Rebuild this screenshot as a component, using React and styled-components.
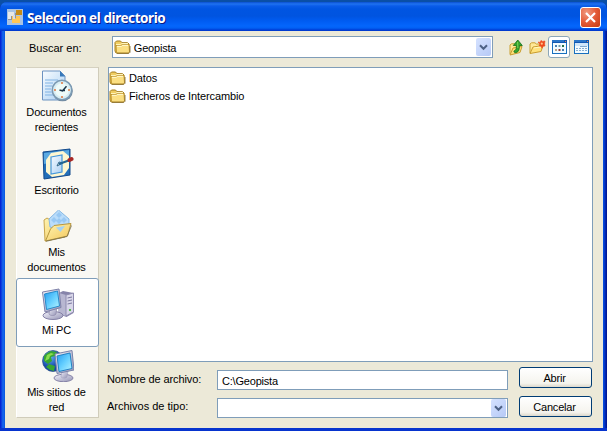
import React from "react";
import styled, { createGlobalStyle } from "styled-components";

const Global = createGlobalStyle`
  * { box-sizing: border-box; }
  body { margin: 0; overflow: hidden; background: #0a4fae; font-family: "Liberation Sans", Arial, sans-serif; font-size: 11px; color: #000; }
  svg { display: block; flex: none; }
`;

const Desktop = styled.div`
  width: 607px;
  height: 431px;
  padding-top: 2px;
  background: #0a4fa6;
`;
const Window = styled.section`
  height: 429px;
  display: flex;
  flex-direction: column;
  padding: 0 4px 3px 5px;
  border-radius: 7px 7px 0 0;
  background: linear-gradient(90deg, #0019cf 0, #0831d9 1px, #166aee 3px, #0855dd 5px, #0855dd 603px, #0441d8 604px, #001ea0 606px, #00138c 607px);
  box-shadow: inset 0 -3px 0 #0734ce, inset 0 -1px 0 #00138c;
`;
const TitleBar = styled.header`
  height: 29px;
  flex: none;
  margin: 0 -4px 0 -5px;
  padding: 1px 6px 0 7px;
  display: flex;
  align-items: center;
  border-radius: 7px 7px 0 0;
  background: linear-gradient(#0a50d0 0, #1f72f0 2px, #0a5ce8 4px, #0055e2 7px, #0054e0 14px, #005cf2 19px, #0466fc 24px, #0261f4 26px, #003dd7 28px, #0038c8 29px);
`;
const Title = styled.h1`
  flex: 1;
  margin: 0 0 0 4px;
  padding-top: 2px;
  font: bold 13.5px/16px "Noto Sans", sans-serif;
  letter-spacing: -0.42px;
  color: #fff;
  text-shadow: 1px 1px 0 #0a1883;
  white-space: nowrap;
`;
const CloseButton = styled.button`
  width: 21px;
  height: 21px;
  padding: 0;
  border: 1px solid #fff;
  border-radius: 3px;
  background: radial-gradient(circle at 30% 25%, #f09a80, #e35a36 50%, #c43a12);
  display: grid;
  place-items: center;
`;
const Body = styled.main`
  flex: 1;
  min-height: 0;
  display: flex;
  flex-direction: column;
  background: #ece9d8;
  padding: 5px 10px 10px 11px;
`;
const LookIn = styled.div`
  display: flex;
  align-items: center;
  height: 22px;
`;
const LookLabel = styled.label`
  width: 96px;
  padding: 1px 0 0 13px;
`;
const Field = styled.div`
  width: ${(p) => p.$width}px;
  height: ${(p) => p.$height}px;
  display: flex;
  align-items: center;
  padding: 0 1px;
  background: #fff;
  border: 1px solid #7f9db9;
  letter-spacing: -0.2px;
`;
const Value = styled.span`
  flex: 1;
  padding: 1px 0 0 3px;
`;
const Arrow = styled.span`
  width: 15px;
  height: 100%;
  max-height: 18px;
  display: grid;
  place-items: center;
  border-radius: 2px;
  background: linear-gradient(135deg, #d5e2ff, #b6c9f6);
`;
const Tools = styled.div`
  display: flex;
  align-items: center;
  margin-left: 13px;
`;
const Tool = styled.button`
  width: ${(p) => p.$width || 22}px;
  height: 22px;
  padding: 0;
  display: grid;
  place-items: center;
  background: ${(p) => (p.$active ? "#fff" : "transparent")};
  border: 1px solid ${(p) => (p.$active ? "#8ba6b8" : "transparent")};
  border-radius: 3px;
`;
const Middle = styled.div`
  flex: 1;
  min-height: 0;
  display: flex;
  gap: 9px;
  margin-top: 9px;
`;
const Places = styled.nav`
  width: 83px;
  height: 351px;
  flex: none;
  display: flex;
  flex-direction: column;
  padding-top: 2px;
  gap: 13px;
  background: #f9f8f3;
  border: 1px solid #fff;
  border-top-color: #d5d1c0;
  border-right-color: #d0ccba;
  border-bottom-color: #d0ccba;
`;
const Place = styled.div`
  height: ${(p) => (p.$lines === 2 ? 65 : 49)}px;
  flex: none;
  display: flex;
  flex-direction: column;
  align-items: center;
  text-align: center;
  line-height: 15px;
  letter-spacing: -0.15px;
  white-space: pre-line;
  border-radius: 3px;
  ${(p) => p.$selected && `
    margin: -10px -1px;
    padding: 9px 0;
    height: 69px;
    background: #fff;
    border: 1px solid #7f9db9;
  `}
`;
const PlaceText = styled.span`
  width: 78px;
  margin-top: 3px;
  padding-right: 2px;
`;
const Right = styled.div`
  flex: 1;
  display: flex;
  flex-direction: column;
`;
const FileList = styled.ul`
  width: 485px;
  height: 295px;
  margin: 0;
  padding: 1px 0;
  list-style: none;
  background: #fff;
  border: 1px solid #7f9db9;
`;
const FileRow = styled.li`
  height: 18px;
  display: flex;
  align-items: center;
  gap: 3px;
  letter-spacing: -0.12px;
`;
const Form = styled.div`
  display: grid;
  grid-template-columns: 109px 291px 73px;
  grid-template-rows: 20px 20px;
  row-gap: 8px;
  padding-top: 8px;
`;
const FormLabel = styled.label`
  line-height: ${(p) => p.$line || 18}px;
  margin-left: -1px;
  letter-spacing: ${(p) => p.$tracking || 0}px;
`;
const Action = styled.button`
  width: 73px;
  height: 21px;
  margin: ${(p) => p.$top}px 0 0 11px;
  padding: 0 2px 0 0;
  font: 11px "Liberation Sans", Arial, sans-serif;
  letter-spacing: -0.2px;
  color: #000;
  border: 1px solid #003c74;
  border-radius: 3px;
  background: linear-gradient(#fff, #f5f4ee 80%, #dcd8cb);
`;

const Chevron = () => (
  <svg width="9" height="7" viewBox="0 0 9 7" fill="none" stroke="#4d6185" strokeWidth="2">
    <path d="M1 1.3 4.5 4.8 8 1.3" />
  </svg>
);

const Folder = () => (
  <svg width="17" height="14" viewBox="0 0 17 14">
    <path d="M1 11V2.5L2.5 1h4L8 2.7h5.5L15 4v8l-1 1H2z" fill="#f0cd62" stroke="#a27c1d" />
    <path d="M2 4.5h4.5L8 3.5h6" stroke="#fff4bb" fill="none" />
    <path d="M2.5 12 2 5.5h5L8.5 4.5H15L15.5 12l-1 1H3z" fill="#fbdf82" stroke="#b98d24" strokeWidth=".8" />
    <path d="M3 6.3h4.5l1-1H14" stroke="#fffbd7" fill="none" />
    <path d="M3 13.3h12l1-1V6" stroke="#7c6224" fill="none" strokeWidth=".8" />
  </svg>
);

const AppIcon = () => (
  <svg width="16" height="16" viewBox="0 0 16 16">
    <path d="M0 0h16v16H0z" fill="#a9c3e3" />
    <path d="M1 3h6v7H1z" fill="#e7e8e8" />
    <path d="M5 7h8v7H5z" fill="#ffc654" />
    <path d="M9 1h6v5H9z" fill="#c58a16" />
    <path d="M6 6h3v4H6z" fill="#d9dde3" />
    <path d="M8.5 4v5.5M1 10.5h4M4.5 7v3" stroke="#8d929b" fill="none" />
  </svg>
);

const OpenFolder = () => (
  <>
    <path d="M1 14V5l1.5-1.2H6L7.3 5H12v2" fill="#ffe898" stroke="#caa033" />
    <path d="M1 14.5 4 8l10-1.5-2 6z" fill="#ffe27c" stroke="#c99c2e" strokeLinejoin="round" />
    <path d="m4.7 9 7.8-1.2" stroke="#fff8c8" />
  </>
);
const UpIcon = () => (
  <svg width="16" height="17" viewBox="0 0 16 17" fill="none">
    <path d="M2 15V6l1.5-1.2h3L7.5 6H13v2" fill="#ffe898" stroke="#caa033" />
    <path d="M2 16 5 9l9-1.5-2 6z" fill="#ffe27c" stroke="#c99c2e" strokeLinejoin="round" />
    <path d="M6.7 13.7c3.6 0 4.9-2.4 4.6-7.2h3L9.8 1 5.3 6.5h3c.2 3 .2 4.5-2.5 5.6z" fill="#35a52e" stroke="#14701b" strokeWidth=".8" />
    <path d="m9.6 3 .3 6" stroke="#79d159" />
  </svg>
);
const NewIcon = () => (
  <svg width="17" height="16" viewBox="0 0 17 16" fill="none">
    <OpenFolder />
    <path d="m9 3 2 .4 1-2 1.5 1L16 2l-.5 3 .5 2-2 .2-1 2-1-2-2-.4 1-1.8z" fill="#ee4a1c" stroke="#ee4a1c" strokeWidth=".6" />
    <circle cx="12.8" cy="4.7" r="1.1" fill="#ffc28a" />
  </svg>
);
const ViewIcon = ({ details }) => (
  <svg width="15" height="14" viewBox="0 0 15 14">
    <path d="M0 0h15v14H0z" fill="#1970bf" />
    <path d="M0 0h15v3H0z" fill="#1258b2" />
    <path d="M0 1h12" stroke="#4292dd" />
    <path d="M13 1h1v1h-1z" fill="#f08852" />
    <path d="M1 3h13v10H1z" fill="#f2fbff" />
    {details ? (
      <g>
        <path d="M1 3h13v3H1z" fill="#cfe6fa" />
        <path d="M6 6.5h7" stroke="#7fa9cf" />
        <path d="M2 8.5h11M2 10.5h11" stroke="#86aed2" strokeDasharray="2 1" />
      </g>
    ) : (
      <>
        <path d="M3 5h2v2H3zm7 4h2v2h-2z" fill="#487fb4" />
        <path d="M6.5 5h2v2h-2z" fill="#709ca9" />
        <path d="M10 5h2v2h-2z" fill="#27724a" />
        <path d="M3 9h2v2H3z" fill="#b8a489" />
        <path d="M6.5 9h2v2h-2z" fill="#923c37" />
      </>
    )}
  </svg>
);

const Big = ({ children }) => (
  <svg width="32" height="32" viewBox="0 0 32 32" fill="none">
    <defs>
      <linearGradient id="screen" x2="1" y2="1"><stop stopColor="#239bf0" /><stop offset=".5" stopColor="#65cfff" /><stop offset="1" stopColor="#b8f4ff" /></linearGradient>
      <linearGradient id="paper" x2="1" y2="1"><stop stopColor="#f8fcff" /><stop offset="1" stopColor="#a9cff3" /></linearGradient>
      <linearGradient id="gold" x2="1" y2="1"><stop stopColor="#fff4b1" /><stop offset="1" stopColor="#f3c659" /></linearGradient>
      <linearGradient id="metal" x2="1" y2="1"><stop stopColor="#f3f3fb" /><stop offset="1" stopColor="#9493b5" /></linearGradient>
      <radialGradient id="earth" cx=".35" cy=".3"><stop stopColor="#63b8fa" /><stop offset="1" stopColor="#1647aa" /></radialGradient>
    </defs>
    {children}
  </svg>
);
const RecentIcon = () => (
  <Big>
    <path d="M.5 1h17.5l5 5v24H.5z" fill="url(#paper)" stroke="#6d93c2" />
    <path d="M18 1v5.5h5z" fill="#3778b9" />
    <path d="M3 10h13M3 13h8M3 16h7M3 19h6M3 22h7M3 25h8" stroke="#80b3e3" />
    <circle cx="20.5" cy="21" r="10.3" fill="#71899f" />
    <circle cx="20" cy="20" r="9.7" fill="#d8edf3" stroke="#7c9bb4" strokeWidth="1.5" />
    <circle cx="20" cy="20" r="6.8" fill="#eefbf9" />
    <path d="M20 12v2M20 26v2M12 20h2M26 20h2" stroke="#e1773f" strokeWidth="1.5" />
    <path d="m17.5 20 3 1 4-4.8M19 20.5h4" stroke="#173348" strokeWidth="1.5" />
  </Big>
);
const DesktopIcon = () => (
  <Big>
    <path d="M1 4 28 1v26L2 31z" fill="#236fb9" stroke="#144b8c" />
    <path d="m2 5 25-3v9L2 16z" fill="#5aa9e1" />
    <path d="m4 12 5-7 12-2 6 5v12l-5 7-12 2-6-5z" fill="#fff7d0" />
    <path d="m9 9 11-2v17L9 26z" fill="url(#paper)" stroke="#4396da" strokeWidth="1.2" />
    <path d="m15 18 2-4 4 1z" fill="#dcebf0" stroke="#356a8a" />
    <path d="m17 16 11-4" stroke="#236693" strokeWidth="2" />
    <path d="m27.5 12 2-1" stroke="#a82825" strokeWidth="4" strokeLinecap="round" />
  </Big>
);
const DocumentsIcon = () => (
  <Big>
    <path d="m2 10 3-2 5 3 4 3 14 0-5 13-20 4z" fill="url(#gold)" stroke="#c8a54d" />
    <path d="M16.5 0 7 9l1 8 8 3 11-6V9z" fill="#b9dcfa" stroke="#86b8e4" strokeLinejoin="round" />
    <path d="m17 2 3 3-3 3-3-3zm-5 5 3 3-3 3-3-3zm5 1 3 3-3 3-3-3zm5-1 3 3-3 3-3-3z" fill="#98c8f3" />
    <path d="m3.500 31 5-12 3.500-3.500 17-2-3.500 12.500z" fill="url(#gold)" stroke="#b8973f" strokeLinejoin="round" />
    <path d="m14 17.500 9-1.500-4.500 6z" fill="#a5d2f2" />
    <path d="m4 31.300 21-4.800 4.500-11" stroke="#78704e" strokeWidth=".8" />
  </Big>
);
const Monitor = () => (
  <>
    <ellipse cx="11" cy="27.500" rx="10" ry="4" fill="url(#metal)" stroke="#8582a7" />
    <path d="m8 19 7-1-1 8c-1 2-6 2-7 0z" fill="url(#metal)" stroke="#8482a3" strokeWidth=".6" />
    <path d="M.5 4 17 1l2 18.500L3 24z" fill="url(#metal)" stroke="#7d80a8" />
    <path d="m2.500 6 13-3 2 15L4.500 21.500z" fill="url(#screen)" stroke="#268acb" />
  </>
);
const ComputerIcon = () => (
  <Big>
    <path d="m17 5 4-2 10.500 2v20l-7 4-8-3V5z" fill="#8684aa" />
    <path d="m17 5 7 2v21l-7-2z" fill="#b8b7d1" />
    <path d="m24 7 7.500-2v19L24 28z" fill="#d8d6e9" stroke="#8e8baf" />
    <path d="m25.500 10 4.500-1m-4.500 4 4.500-1m-4.500 4 4.500-1" stroke="#7c7a9f" />
    <path d="M27 21h2v2h-2z" fill="#58b94f" />
    <Monitor />
  </Big>
);
const NetworkIcon = () => (
  <Big>
    <circle cx="11" cy="11" r="10.500" fill="url(#earth)" stroke="#295080" strokeWidth=".7" />
    <path d="M4 4 9 1l6 1-2 4-4 1 1 4-4 3-4-3 0-5zm3 10 6 2-1 5-4-1-4-3z" fill="#38a632" />
    <path d="m5 5 4-2 3 1-4 2-1 3-4 2z" fill="#8bdd4e" />
    <g transform="translate(12 0)">
      <ellipse cx="9.500" cy="28" rx="9.500" ry="3.700" fill="url(#metal)" stroke="#8582a7" />
      <path d="m8 20 6 1-1 6c-2 2-5 1-6 0z" fill="url(#metal)" stroke="#9a98b9" strokeWidth=".5" />
      <path d="m1 4 17-3.500 2 19.500-17 3.500z" fill="url(#metal)" stroke="#7a82a9" />
      <path d="m3 6 13-3 2 15.500-13 3z" fill="url(#screen)" stroke="#2383c4" />
    </g>
  </Big>
);

const places = [
  { text: "Documentos\nrecientes", lines: 2, Icon: RecentIcon },
  { text: "Escritorio", lines: 1, Icon: DesktopIcon },
  { text: "Mis\ndocumentos", lines: 2, Icon: DocumentsIcon },
  { text: "Mi PC", lines: 1, Icon: ComputerIcon, selected: true },
  { text: "Mis sitios de\nred", lines: 2, Icon: NetworkIcon },
];

export default function App() {
  return (
    <Desktop>
      <Global />
      <Window>
        <TitleBar>
          <AppIcon />
          <Title>Seleccion el directorio</Title>
          <CloseButton aria-label="Cerrar">
            <svg width="13" height="13" viewBox="0 0 13 13" stroke="#fff" strokeWidth="2.2"><path d="m2 2 9 9m0-9-9 9" /></svg>
          </CloseButton>
        </TitleBar>
        <Body>
          <LookIn>
            <LookLabel>Buscar en:</LookLabel>
            <Field $width={382} $height={22}>
              <Folder /><Value>Geopista</Value><Arrow><Chevron /></Arrow>
            </Field>
            <Tools>
              <Tool $width={20}><UpIcon /></Tool>
              <Tool $width={22}><NewIcon /></Tool>
              <Tool $width={22} $active><ViewIcon /></Tool>
              <Tool $width={23}><ViewIcon details /></Tool>
            </Tools>
          </LookIn>
          <Middle>
            <Places>
              {places.map(({ text, lines, Icon, selected }) => (
                <Place key={text} $lines={lines} $selected={selected}>
                  <Icon />
                  <PlaceText>{text}</PlaceText>
                </Place>
              ))}
            </Places>
            <Right>
              <FileList>
                <FileRow><Folder />Datos</FileRow>
                <FileRow><Folder />Ficheros de Intercambio</FileRow>
              </FileList>
              <Form>
                <FormLabel $tracking={-0.1}>Nombre de archivo:</FormLabel>
                <Field $width={291} $height={20}><Value>C:\Geopista</Value></Field>
                <Action $top={-3}>Abrir</Action>
                <FormLabel $line={17}>Archivos de tipo:</FormLabel>
                <Field $width={291} $height={20}><Value /><Arrow><Chevron /></Arrow></Field>
                <Action $top={-2}>Cancelar</Action>
              </Form>
            </Right>
          </Middle>
        </Body>
      </Window>
    </Desktop>
  );
}
